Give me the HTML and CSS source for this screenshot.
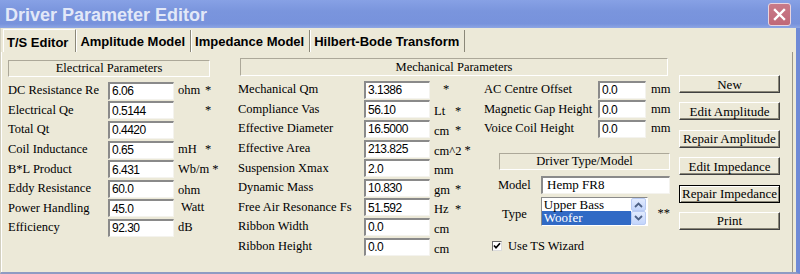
FILE: index.html
```html
<!DOCTYPE html>
<html lang="en">
<head>
    <meta charset="UTF-8">
    <meta name="viewport" content="width=device-width, initial-scale=1.0">
    <title>Driver Parameter Editor</title>
    <link rel="stylesheet" href="styles.css">
</head>
<body>
    <div class="window">
        <div class="titlebar">
            <span class="title">Driver Parameter Editor</span>
            <span class="close-btn">
                <svg width="13" height="13" viewBox="0 0 13 13">
                    <path d="M2 2 L11 11 M11 2 L2 11" stroke="#fff" stroke-width="2.4" stroke-linecap="square"/>
                </svg>
            </span>
        </div>

        <div class="client">
            <div class="tabs">
                <div class="tab active">T/S Editor</div>
                <div class="tab">Amplitude Model</div>
                <div class="tab">Impedance Model</div>
                <div class="tab">Hilbert-Bode Transform</div>
            </div>

            <div class="panel">
                <!-- Electrical -->
                <div class="col-elec">
                    <div class="head head-elec">Electrical Parameters</div>
                    <div class="row">
                        <span class="lbl">DC Resistance Re</span>
                        <input class="field" type="text" value="6.06">
                        <span class="unit">ohm</span><span class="star">*</span>
                    </div>
                    <div class="row">
                        <span class="lbl">Electrical Qe</span>
                        <input class="field" type="text" value="0.5144">
                        <span class="unit"></span><span class="star">*</span>
                    </div>
                    <div class="row">
                        <span class="lbl">Total Qt</span>
                        <input class="field" type="text" value="0.4420">
                    </div>
                    <div class="row">
                        <span class="lbl">Coil Inductance</span>
                        <input class="field" type="text" value="0.65">
                        <span class="unit">mH</span><span class="star">*</span>
                    </div>
                    <div class="row">
                        <span class="lbl">B*L Product</span>
                        <input class="field" type="text" value="6.431">
                        <span class="unit">Wb/m</span><span class="star">*</span>
                    </div>
                    <div class="row">
                        <span class="lbl">Eddy Resistance</span>
                        <input class="field" type="text" value="60.0">
                        <span class="unit low">ohm</span>
                    </div>
                    <div class="row">
                        <span class="lbl">Power Handling</span>
                        <input class="field" type="text" value="45.0">
                        <span class="unit watt">Watt</span>
                    </div>
                    <div class="row">
                        <span class="lbl">Efficiency</span>
                        <input class="field" type="text" value="92.30">
                        <span class="unit">dB</span>
                    </div>
                </div>

                <!-- Mechanical -->
                <div class="mech">
                    <div class="head head-mech">Mechanical Parameters</div>
                    <div class="mech-body">
                        <div class="mech-rows">
                            <div class="row">
                                <span class="lbl lbl-mech">Mechanical Qm</span>
                                <input class="field" type="text" value="3.1386">
                                <span class="star star-qm">*</span>
                            </div>
                            <div class="row">
                                <span class="lbl lbl-mech">Compliance Vas</span>
                                <input class="field" type="text" value="56.10">
                                <span class="unit unit-mech">Lt</span><span class="star">*</span>
                            </div>
                            <div class="row">
                                <span class="lbl lbl-mech">Effective Diameter</span>
                                <input class="field" type="text" value="16.5000">
                                <span class="unit unit-mech">cm</span><span class="star">*</span>
                            </div>
                            <div class="row">
                                <span class="lbl lbl-mech">Effective Area</span>
                                <input class="field" type="text" value="213.825">
                                <span class="unit unit-mech">cm^2</span><span class="star">*</span>
                            </div>
                            <div class="row">
                                <span class="lbl lbl-mech">Suspension Xmax</span>
                                <input class="field" type="text" value="2.0">
                                <span class="unit unit-mech">mm</span>
                            </div>
                            <div class="row">
                                <span class="lbl lbl-mech">Dynamic Mass</span>
                                <input class="field" type="text" value="10.830">
                                <span class="unit unit-mech">gm</span><span class="star">*</span>
                            </div>
                            <div class="row">
                                <span class="lbl lbl-mech">Free Air Resonance Fs</span>
                                <input class="field" type="text" value="51.592">
                                <span class="unit unit-mech">Hz</span><span class="star">*</span>
                            </div>
                            <div class="row">
                                <span class="lbl lbl-mech">Ribbon Width</span>
                                <input class="field" type="text" value="0.0">
                                <span class="unit unit-mech">cm</span>
                            </div>
                            <div class="row">
                                <span class="lbl lbl-mech">Ribbon Height</span>
                                <input class="field" type="text" value="0.0">
                                <span class="unit unit-mech">cm</span>
                            </div>
                        </div>

                        <div class="ac">
                            <div class="row">
                                <span class="lbl lbl-ac">AC Centre Offset</span>
                                <input class="field field-sm" type="text" value="0.0">
                                <span class="unit-mm">mm</span>
                            </div>
                            <div class="row">
                                <span class="lbl lbl-ac">Magnetic Gap Height</span>
                                <input class="field field-sm" type="text" value="0.0">
                                <span class="unit-mm">mm</span>
                            </div>
                            <div class="row">
                                <span class="lbl lbl-ac">Voice Coil Height</span>
                                <input class="field field-sm" type="text" value="0.0">
                                <span class="unit-mm">mm</span>
                            </div>

                            <div class="head head-driver">Driver Type/Model</div>
                            <div class="model-row">
                                <span class="lbl-model">Model</span>
                                <input class="field field-model" type="text" value="Hemp FR8">
                            </div>
                            <div class="type-row">
                                <span class="lbl-type">Type</span>
                                <div class="listbox">
                                    <div class="items">
                                        <div class="item">Upper Bass</div>
                                        <div class="item sel">Woofer</div>
                                    </div>
                                    <div class="scroll">
                                        <div class="sbtn">
                                            <svg width="9" height="6" viewBox="0 0 9 6"><path d="M1 5 L4.5 1.5 L8 5" fill="none" stroke="#4d6185" stroke-width="1.8"/></svg>
                                        </div>
                                        <div class="sbtn">
                                            <svg width="9" height="6" viewBox="0 0 9 6"><path d="M1 1 L4.5 4.5 L8 1" fill="none" stroke="#4d6185" stroke-width="1.8"/></svg>
                                        </div>
                                    </div>
                                </div>
                                <span class="dstar">**</span>
                            </div>
                            <div class="check-row">
                                <span class="chk">
                                    <svg width="8" height="8" viewBox="0 0 8 8"><path d="M1 3.5 L3 5.8 L7 1.2" fill="none" stroke="#000" stroke-width="1.7"/></svg>
                                </span>
                                <span class="chk-text">Use TS Wizard</span>
                            </div>
                        </div>
                    </div>
                </div>

                <!-- Buttons -->
                <div class="buttons">
                    <button class="btn">New</button>
                    <button class="btn">Edit Amplitude</button>
                    <button class="btn">Repair Amplitude</button>
                    <button class="btn">Edit Impedance</button>
                    <button class="btn btn-default">Repair Impedance</button>
                    <button class="btn">Print</button>
                </div>
            </div>
        </div>
    </div>
</body>
</html>
```

FILE: styles.css
```css
body {
    margin: 0;
    font-family: "Liberation Serif", serif;
    font-size: 12.5px;
    color: #000;
}

.window {
    width: 800px;
    height: 274px;
    display: flex;
    flex-direction: column;
    overflow: hidden;
    background-color: #ece9d8;
}

/* title bar */
.titlebar {
    height: 28px;
    flex: none;
    display: flex;
    align-items: center;
    padding-left: 5px;
    box-sizing: border-box;
    background: linear-gradient(#87a1e5, #7a95dd 40%, #7792dc 85%, #8ea6e4);
}

.title {
    font-family: "Liberation Sans", sans-serif;
    font-weight: bold;
    font-size: 18px;
    color: #e2e8f8;
    margin-top: 2px;
}

.close-btn {
    margin-left: auto;
    margin-right: 9px;
    width: 21px;
    height: 21px;
    border: 1px solid #e9d4de;
    border-radius: 3px;
    background: linear-gradient(#c97a88, #c06878);
    display: flex;
    align-items: center;
    justify-content: center;
}

/* client area */
.client {
    flex: 1;
    display: flex;
    flex-direction: column;
    border-left: 1px solid #d2cfbf;
    border-right: 4px solid #6e8ad6;
    border-bottom: 2px solid #8e9bc3;
}

.tabs {
    height: 24px;
    flex: none;
    display: flex;
    align-items: flex-end;
    padding-left: 2px;
}

.tab {
    height: 22px;
    box-sizing: border-box;
    padding: 2px 5px 0 3px;
    line-height: 20px;
    font-family: "Liberation Sans", sans-serif;
    font-weight: bold;
    font-size: 13px;
    border-left: 1px solid #fff;
    border-right: 1px solid #8a8778;
    white-space: nowrap;
}

.tab.active {
    height: 23px;
    padding-top: 3px;
    padding-right: 7px;
    border-top: 1px solid #fff;
}

.panel {
    flex: 1;
    display: flex;
    border-left: 1px solid #fff;
    border-right: 1px solid #9a9788;
    margin-right: 3px;
}

/* group headers */
.head {
    height: 17px;
    box-sizing: border-box;
    border: 1px solid;
    border-color: #aca899 #fff #fff #aca899;
    text-align: center;
    line-height: 15px;
    white-space: nowrap;
}

.head-elec {
    width: 202px;
    margin-bottom: 4px;
}

.head-mech {
    width: 428px;
    height: 18px;
    margin-left: 2px;
    margin-bottom: 4px;
    line-height: 16px;
}

.head-driver {
    width: 171px;
    margin-left: 15px;
    margin-top: 14px;
}

/* rows */
.row {
    display: flex;
    align-items: center;
    height: 19.6px;
    white-space: nowrap;
}

.lbl {
    width: 100px;
    flex: none;
}

.lbl-mech {
    width: 126px;
}

.lbl-ac {
    width: 114px;
}

.field {
    width: 66px;
    height: 18px;
    box-sizing: border-box;
    margin: 0;
    padding: 0 0 0 2px;
    border-style: solid;
    border-width: 2px 1px 1px 2px;
    border-color: #8a8a8a #f4f3ee #f4f3ee #8a8a8a;
    background: #fff;
    font-family: "Liberation Sans", sans-serif;
    font-size: 12px;
    letter-spacing: -0.5px;
    color: #000;
    outline: none;
}

.field-sm {
    width: 48px;
}

.unit {
    margin-left: 4px;
    min-width: 24px;
}

.unit.low {
    padding-top: 4px;
}

.unit.watt {
    margin-left: 7px;
    margin-top: -2px;
}

.unit-mech {
    min-width: 18px;
    padding-top: 5px;
}

.star {
    margin-left: 3px;
}

.mech .star {
    padding-top: 4px;
}

.mech .star.star-qm {
    margin-left: 13px;
    padding-top: 0;
}

.unit-mm {
    margin-left: 5px;
}

/* columns */
.col-elec {
    width: 230px;
    flex: none;
    margin-left: 6px;
    padding-top: 8px;
}

.mech {
    width: 432px;
    flex: none;
    padding-top: 6px;
}

.mech-body {
    display: flex;
}

.mech-rows {
    width: 246px;
    flex: none;
}

.ac {
    width: 186px;
    flex: none;
}

/* driver type / model */
.model-row {
    display: flex;
    align-items: center;
    margin-top: 6px;
    margin-left: 14px;
}

.lbl-model {
    width: 43px;
    padding-top: 2px;
}

.field-model {
    width: 129px;
    font-family: "Liberation Serif", serif;
    font-size: 13px;
    letter-spacing: 0;
    padding-left: 4px;
}

.type-row {
    display: flex;
    align-items: center;
    margin-top: 3px;
    margin-left: 18px;
}

.lbl-type {
    width: 39px;
    padding-top: 7px;
}

.listbox {
    width: 107px;
    height: 29px;
    box-sizing: border-box;
    display: flex;
    border: 1px solid;
    border-color: #8a8a8a #fff #fff #8a8a8a;
    background: #fff;
}

.items {
    flex: 1;
}

.item {
    height: 13.5px;
    line-height: 13px;
    padding-left: 2px;
    font-size: 13px;
}

.item.sel {
    background-color: #316ac5;
    color: #fff;
}

.scroll {
    width: 15px;
    display: flex;
    flex-direction: column;
    margin-right: 1px;
}

.sbtn {
    flex: 1;
    box-sizing: border-box;
    border: 1px solid #b9cbf3;
    border-radius: 2px;
    background: linear-gradient(#e2ebfe, #c3d5fb);
    display: flex;
    align-items: center;
    justify-content: center;
}

.dstar {
    margin-left: 10px;
    padding-top: 5px;
}

.check-row {
    display: flex;
    align-items: center;
    margin-top: 13px;
    margin-left: 8px;
}

.chk {
    width: 10px;
    height: 10px;
    box-sizing: border-box;
    border: 1px solid;
    border-color: #6b6b6b #dcdcdc #dcdcdc #6b6b6b;
    background: #fff;
    display: flex;
    align-items: center;
    justify-content: center;
}

.chk-text {
    margin-left: 6px;
}

/* buttons */
.buttons {
    margin-left: 9px;
    padding-top: 23px;
    display: flex;
    flex-direction: column;
    gap: 9.4px;
}

.btn {
    width: 101px;
    height: 18px;
    box-sizing: border-box;
    margin: 0;
    padding: 0;
    background-color: #ece9d8;
    border: 1px solid;
    border-color: #fff #404040 #404040 #fff;
    box-shadow: inset -1px -1px #8a8778;
    font-family: "Liberation Serif", serif;
    font-size: 13px;
    line-height: 15px;
    color: #000;
    white-space: nowrap;
}

.btn-default {
    border-color: #000;
    box-shadow: inset 1px 1px #fff, inset -1px -1px #8a8778;
}
```
